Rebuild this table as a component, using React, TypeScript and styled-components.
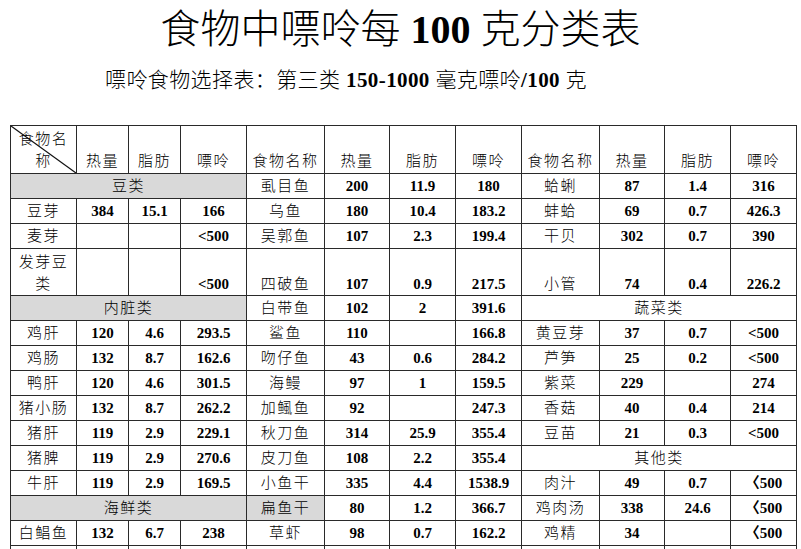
import React from 'react';
import styled, { createGlobalStyle } from 'styled-components';

const GlobalStyle = createGlobalStyle`
  body {
    margin: 0;
    background: #ffffff;
    color: #000000;
    font-family: "Liberation Serif", "Noto Sans CJK SC", serif;
  }
`;

const Page = styled.div`
  width: 801px;
`;

const Title = styled.h1`
  margin: 0;
  padding-top: 8px;
  font-size: 40px;
  line-height: 44px;
  font-weight: 300;
  text-align: center;
`;

const Latin = styled.b`
  font-family: "Liberation Serif", serif;
  font-weight: 700;
`;

const Subtitle = styled.p`
  margin: 14px 0 0 0;
  padding-left: 105px;
  font-size: 21px;
  line-height: 28px;
  font-weight: 300;
  letter-spacing: 0.4px;
`;

const Table = styled.table`
  margin: 31px 0 0 10px;
  width: 787px;
  border-collapse: collapse;
  table-layout: fixed;
  border-top: 1px solid #9a9a9a;
`;

const Cell = styled.td<{ $shade?: boolean; $num?: boolean; $bottom?: boolean }>`
  border: 1px solid #2a2a2a;
  padding: 0 2px;
  height: 24px;
  text-align: center;
  vertical-align: ${(p) => (p.$bottom ? 'bottom' : 'middle')};
  background: ${(p) => (p.$shade ? '#d9d9d9' : '#ffffff')};
  font-size: 15px;
  line-height: 22px;
  letter-spacing: ${(p) => (p.$num ? '0' : '1.5px')};
  font-weight: ${(p) => (p.$num ? 700 : 300)};
  white-space: normal;
`;

const HeadCell = styled(Cell)`
  height: 46px;
  vertical-align: bottom;
  padding-bottom: 1px;
`;

const DiagCell = styled(HeadCell)`
  position: relative;
  line-height: 22px;
`;

const Diagonal = styled.svg`
  position: absolute;
  inset: 0;
  width: 100%;
  height: 100%;
  pointer-events: none;
`;

const TallRow = styled.tr`
  & > td {
    height: 46px;
    vertical-align: bottom;
  }
`;

type Item = { name: string; kcal?: string; fat?: string; purine?: string; shade?: boolean };
type Group = { cat: string; shade?: boolean } | Item;
type Row = { groups: Group[]; tall?: boolean };

const rows: Row[] = [
  { groups: [{ cat: '豆类', shade: true }, { name: '虱目鱼', kcal: '200', fat: '11.9', purine: '180' }, { name: '蛤蜊', kcal: '87', fat: '1.4', purine: '316' }] },
  { groups: [{ name: '豆芽', kcal: '384', fat: '15.1', purine: '166' }, { name: '乌鱼', kcal: '180', fat: '10.4', purine: '183.2' }, { name: '蚌蛤', kcal: '69', fat: '0.7', purine: '426.3' }] },
  { groups: [{ name: '麦芽', purine: '<500' }, { name: '吴郭鱼', kcal: '107', fat: '2.3', purine: '199.4' }, { name: '干贝', kcal: '302', fat: '0.7', purine: '390' }] },
  { tall: true, groups: [{ name: '发芽豆类', purine: '<500' }, { name: '四破鱼', kcal: '107', fat: '0.9', purine: '217.5' }, { name: '小管', kcal: '74', fat: '0.4', purine: '226.2' }] },
  { groups: [{ cat: '内脏类', shade: true }, { name: '白带鱼', kcal: '102', fat: '2', purine: '391.6' }, { cat: '蔬菜类' }] },
  { groups: [{ name: '鸡肝', kcal: '120', fat: '4.6', purine: '293.5' }, { name: '鲨鱼', kcal: '110', purine: '166.8' }, { name: '黄豆芽', kcal: '37', fat: '0.7', purine: '<500' }] },
  { groups: [{ name: '鸡肠', kcal: '132', fat: '8.7', purine: '162.6' }, { name: '吻仔鱼', kcal: '43', fat: '0.6', purine: '284.2' }, { name: '芦笋', kcal: '25', fat: '0.2', purine: '<500' }] },
  { groups: [{ name: '鸭肝', kcal: '120', fat: '4.6', purine: '301.5' }, { name: '海鳗', kcal: '97', fat: '1', purine: '159.5' }, { name: '紫菜', kcal: '229', purine: '274' }] },
  { groups: [{ name: '猪小肠', kcal: '132', fat: '8.7', purine: '262.2' }, { name: '加鲺鱼', kcal: '92', purine: '247.3' }, { name: '香菇', kcal: '40', fat: '0.4', purine: '214' }] },
  { groups: [{ name: '猪肝', kcal: '119', fat: '2.9', purine: '229.1' }, { name: '秋刀鱼', kcal: '314', fat: '25.9', purine: '355.4' }, { name: '豆苗', kcal: '21', fat: '0.3', purine: '<500' }] },
  { groups: [{ name: '猪脾', kcal: '119', fat: '2.9', purine: '270.6' }, { name: '皮刀鱼', kcal: '108', fat: '2.2', purine: '355.4' }, { cat: '其他类' }] },
  { groups: [{ name: '牛肝', kcal: '119', fat: '2.9', purine: '169.5' }, { name: '小鱼干', kcal: '335', fat: '4.4', purine: '1538.9' }, { name: '肉汁', kcal: '49', fat: '0.7', purine: '〈500' }] },
  { groups: [{ cat: '海鲜类', shade: true }, { name: '扁鱼干', kcal: '80', fat: '1.2', purine: '366.7', shade: true }, { name: '鸡肉汤', kcal: '338', fat: '24.6', purine: '〈500' }] },
  { groups: [{ name: '白鲳鱼', kcal: '132', fat: '6.7', purine: '238' }, { name: '草虾', kcal: '98', fat: '0.7', purine: '162.2' }, { name: '鸡精', kcal: '34', purine: '〈500' }] },
  { groups: [{ name: '' }, { name: '' }, { name: '' }] },
];

const widths = [66, 52, 52, 66, 78, 65, 66, 66, 78, 65, 66, 66];

function GroupCells({ group }: { group: Group }) {
  if ('cat' in group) {
    return (
      <Cell colSpan={4} $shade={group.shade}>
        {group.cat}
      </Cell>
    );
  }
  return (
    <>
      <Cell $shade={group.shade}>{group.name}</Cell>
      <Cell $num>{group.kcal}</Cell>
      <Cell $num>{group.fat}</Cell>
      <Cell $num>{group.purine}</Cell>
    </>
  );
}

function HeadGroup({ first }: { first?: boolean }) {
  return (
    <>
      {first ? (
        <DiagCell>
          <Diagonal viewBox="0 0 100 100" preserveAspectRatio="none">
            <line x1="0" y1="0" x2="100" y2="100" stroke="#111" strokeWidth="1.2" vectorEffect="non-scaling-stroke" />
          </Diagonal>
          食物名称
        </DiagCell>
      ) : (
        <HeadCell>食物名称</HeadCell>
      )}
      <HeadCell>热量</HeadCell>
      <HeadCell>脂肪</HeadCell>
      <HeadCell>嘌呤</HeadCell>
    </>
  );
}

export default function App() {
  return (
    <Page>
      <GlobalStyle />
      <Title>
        食物中嘌呤每 <Latin>100</Latin> 克分类表
      </Title>
      <Subtitle>
        嘌呤食物选择表：第三类 <Latin>150-1000</Latin> 毫克嘌呤<Latin>/100</Latin> 克
      </Subtitle>
      <Table>
        <colgroup>
          {widths.map((w, i) => (
            <col key={i} style={{ width: w }} />
          ))}
        </colgroup>
        <tbody>
          <tr>
            <HeadGroup first />
            <HeadGroup />
            <HeadGroup />
          </tr>
          {rows.map((row, i) => {
            const cells = row.groups.map((g, j) => <GroupCells key={j} group={g} />);
            return row.tall ? <TallRow key={i}>{cells}</TallRow> : <tr key={i}>{cells}</tr>;
          })}
        </tbody>
      </Table>
    </Page>
  );
}
